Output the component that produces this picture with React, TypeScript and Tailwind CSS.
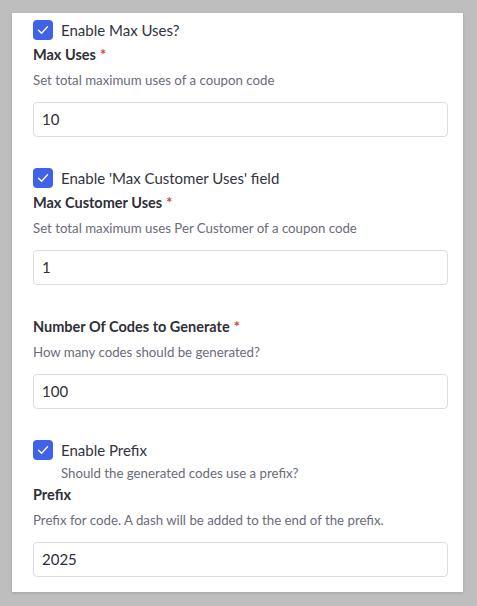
import React from "react";

const font = { fontFamily: "Lato, 'Liberation Sans', sans-serif" };

const CheckBox: React.FC<{ label: string; hint?: string }> = ({ label, hint }) => (
  <div className="flex items-start gap-2">
    <div className="flex h-5 w-5 shrink-0 items-center justify-center rounded-[4px] bg-[#3e63e6]">
      <svg viewBox="0 0 20 20" className="h-5 w-5" fill="none">
        <path d="M5.5 10.2l3 3 6-6.4" stroke="#fff" strokeWidth="1.4" strokeLinecap="round" strokeLinejoin="round" />
      </svg>
    </div>
    <div className="flex flex-col">
      <span className="text-[15px] leading-5 text-[#33333d]">{label}</span>
      {hint && <span className="mt-[3px] text-[13.25px] leading-5 text-[#6b6b7a]">{hint}</span>}
    </div>
  </div>
);

const Field: React.FC<{ label: string; required?: boolean; help: string; value: string }> = ({
  label,
  required,
  help,
  value,
}) => (
  <div className="flex flex-col">
    <div className="text-[14.5px] font-bold leading-5 text-[#2f2f38]">
      {label}
      {required && <span className="ml-1 text-[#d9433f]">*</span>}
    </div>
    <div className="mt-[5px] text-[13.25px] leading-5 text-[#6b6b7a]">{help}</div>
    <div className="mt-[12px] flex h-[35px] items-center rounded-[4px] border border-[#dcdce2] px-[8px] text-[15px] text-[#2f2f38]">
      {value}
    </div>
  </div>
);

export default function App() {
  return (
    <div className="min-h-[606px] bg-[#bebebe] pl-[12px] pr-[14px] pt-[13px]" style={font}>
      <div className="bg-white pb-[15px] pl-[21px] pr-[15px] pt-[7px] shadow-[0_1px_3px_rgba(0,0,0,0.15)]">
        <CheckBox label="Enable Max Uses?" />
        <div className="mt-[5px]">
          <Field label="Max Uses" required help="Set total maximum uses of a coupon code" value="10" />
        </div>
        <div className="mt-[31px]">
          <CheckBox label="Enable 'Max Customer Uses' field" />
        </div>
        <div className="mt-[5px]">
          <Field
            label="Max Customer Uses"
            required
            help="Set total maximum uses Per Customer of a coupon code"
            value="1"
          />
        </div>
        <div className="mt-[32px]">
          <Field label="Number Of Codes to Generate" required help="How many codes should be generated?" value="100" />
        </div>
        <div className="mt-[31px]">
          <CheckBox label="Enable Prefix" hint="Should the generated codes use a prefix?" />
        </div>
        <div className="mt-[2px]">
          <Field label="Prefix" help="Prefix for code. A dash will be added to the end of the prefix." value="2025" />
        </div>
      </div>
    </div>
  );
}
